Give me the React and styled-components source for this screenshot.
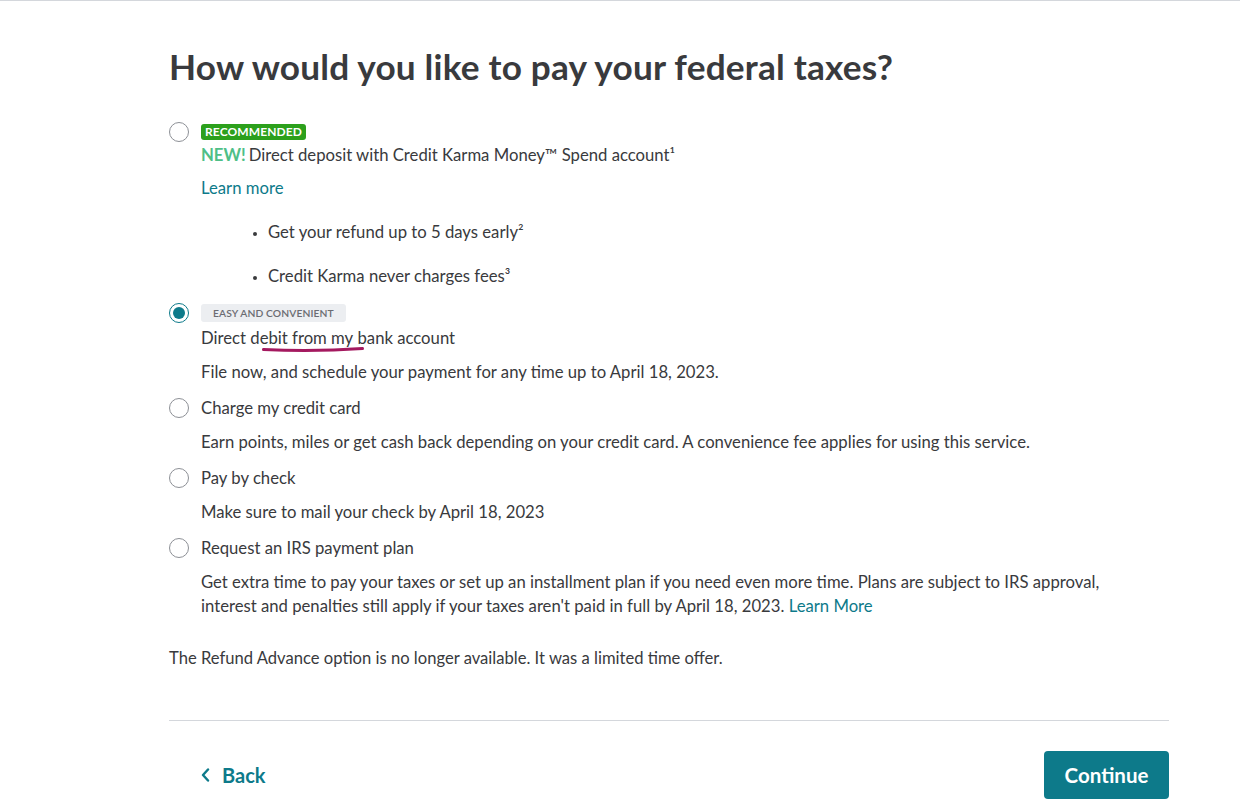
import React from "react";
import styled, { createGlobalStyle } from "styled-components";

const Global = createGlobalStyle`
  html, body { margin: 0; padding: 0; background: #fff; }
  body { font-family: "Lato", "Noto Sans", sans-serif; color: #393a3d; }
`;

const Page = styled.div`
  border-top: 1px solid #d4d7dc;
`;

const Main = styled.main`
  margin-left: 169px;
  width: 1000px;
`;

const Title = styled.h1`
  margin: 42px 0 35px;
  font-size: 35.2px;
  line-height: 46px;
  font-weight: 700;
  color: #393a3d;
  letter-spacing: 0.2px;
`;

const Options = styled.div`
  display: flex;
  flex-direction: column;
  gap: 12px;
`;

const Option = styled.div`
  display: flex;
  align-items: flex-start;
  gap: 12px;
`;

const Radio = styled.span`
  flex: none;
  box-sizing: border-box;
  width: 20px;
  height: 20px;
  border-radius: 50%;
  border: 1px solid ${(p) => (p.$checked ? "#0d7a8a" : "#8d9096")};
  margin-top: ${(p) => p.$offset}px;
  display: flex;
  align-items: center;
  justify-content: center;
  &::after {
    content: "";
    display: ${(p) => (p.$checked ? "block" : "none")};
    width: 12px;
    height: 12px;
    border-radius: 50%;
    background: #0d7a8a;
  }
`;

const Content = styled.div`
  display: flex;
  flex-direction: column;
  font-size: 16.7px;
  line-height: 24px;
`;

const Badge = styled.span`
  align-self: flex-start;
  font-size: ${(p) => (p.$green ? "12px" : "10.3px")};
  font-weight: ${(p) => (p.$green ? 700 : 600)};
  line-height: ${(p) => (p.$green ? "16px" : "18px")};
  padding: ${(p) => (p.$green ? "0 4px" : "0 12px")};
  border-radius: 3px;
  background: ${(p) => (p.$green ? "#2ca01c" : "#eceef1")};
  color: ${(p) => (p.$green ? "#fff" : "#6b6c72")};
  letter-spacing: 0.1px;
`;

const Label = styled.div`
  margin-top: ${(p) => p.$gap || 0}px;
  color: #393a3d;
`;

const New = styled.span`
  color: #4fbf87;
  font-weight: 700;
  margin-right: 3px;
`;

const Marked = styled.span`
  position: relative;
`;

const Scribble = styled.svg`
  position: absolute;
  left: 12px;
  top: 18px;
  overflow: visible;
`;

const Desc = styled.div`
  margin-top: 10px;
  color: #393a3d;
`;

const Link = styled.a`
  color: #0d7a8a;
  text-decoration: none;
  cursor: pointer;
`;

const LearnRow = styled.div`
  margin-top: 9px;
`;

const Bullets = styled.ul`
  margin: 20px 0 4px;
  padding: 0 0 0 67px;
  li { margin-bottom: 20px; }
  li:last-child { margin-bottom: 0; }
  li::marker { font-size: 13px; }
`;

const Note = styled.p`
  margin: 28px 0 0;
  font-size: 16.6px;
  line-height: 24px;
`;

const Divider = styled.hr`
  margin: 50px 0 0;
  border: 0;
  border-top: 1px solid #d4d7dc;
`;

const Footer = styled.div`
  display: flex;
  justify-content: space-between;
  align-items: center;
  margin-top: 30px;
`;

const BackButton = styled.button`
  display: flex;
  align-items: center;
  gap: 12px;
  background: none;
  border: 0;
  padding: 0 0 0 32px;
  color: #0d7a8a;
  font-family: inherit;
  font-size: 20px;
  font-weight: 700;
  cursor: pointer;
`;

const Primary = styled.button`
  width: 125px;
  height: 48px;
  background: #0d7a8a;
  border: 0;
  border-radius: 4px;
  color: #fff;
  font-family: inherit;
  font-size: 20.5px;
  font-weight: 700;
  cursor: pointer;
`;

export default function App() {
  return (
    <>
      <Global />
      <Page>
        <Main>
          <Title>How would you like to pay your federal taxes?</Title>
          <Options>
            <Option>
              <Radio $offset={-2} />
              <Content>
                <Badge $green>RECOMMENDED</Badge>
                <Label $gap={3}>
                  <New>NEW!</New>Direct deposit with Credit Karma Money™ Spend account¹
                </Label>
                <LearnRow>
                  <Link>Learn more</Link>
                </LearnRow>
                <Bullets>
                  <li>Get your refund up to 5 days early²</li>
                  <li>Credit Karma never charges fees³</li>
                </Bullets>
              </Content>
            </Option>
            <Option>
              <Radio $checked $offset={-1} />
              <Content>
                <Badge>EASY AND CONVENIENT</Badge>
                <Label $gap={4}>
                  Direct <Marked>debit from my
                    <Scribble width="102" height="6" viewBox="0 0 102 6">
                      <path
                        d="M1.5 3.6 C 30 4.8, 70 4.6, 100.5 2.6"
                        fill="none"
                        stroke="#a4195f"
                        strokeWidth="3"
                        strokeLinecap="round"
                      />
                    </Scribble>
                  </Marked> bank account
                </Label>
                <Desc>File now, and schedule your payment for any time up to April 18, 2023.</Desc>
              </Content>
            </Option>
            <Option>
              <Radio $offset={2} />
              <Content>
                <Label>Charge my credit card</Label>
                <Desc>
                  Earn points, miles or get cash back depending on your credit card. A convenience fee applies for using this service.
                </Desc>
              </Content>
            </Option>
            <Option>
              <Radio $offset={2} />
              <Content>
                <Label>Pay by check</Label>
                <Desc>Make sure to mail your check by April 18, 2023</Desc>
              </Content>
            </Option>
            <Option>
              <Radio $offset={2} />
              <Content>
                <Label>Request an IRS payment plan</Label>
                <Desc>
                  Get extra time to pay your taxes or set up an installment plan if you need even more time. Plans are subject to IRS approval,
                  <br />
                  interest and penalties still apply if your taxes aren't paid in full by April 18, 2023. <Link>Learn More</Link>
                </Desc>
              </Content>
            </Option>
          </Options>
          <Note>The Refund Advance option is no longer available. It was a limited time offer.</Note>
          <Divider />
          <Footer>
            <BackButton>
              <svg width="9" height="14" viewBox="0 0 9 14">
                <path d="M7 1.5 L2 7 L7 12.5" fill="none" stroke="#0d7a8a" strokeWidth="2.4" strokeLinecap="round" strokeLinejoin="round" />
              </svg>
              Back
            </BackButton>
            <Primary>Continue</Primary>
          </Footer>
        </Main>
      </Page>
    </>
  );
}
